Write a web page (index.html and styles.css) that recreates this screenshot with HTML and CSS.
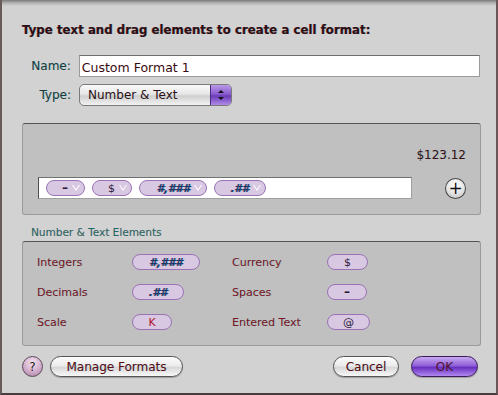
FILE: index.html
```html
<!DOCTYPE html>
<html lang="en">

<head>
    <meta charset="UTF-8">
    <title>Cell Format</title>
    <link rel="stylesheet" href="styles.css">
</head>

<body>
    <div class="sheet">
        <h1 class="title">Type text and drag elements to create a cell format:</h1>

        <div class="field-row">
            <label class="field-label" for="name">Name:</label>
            <input type="text" id="name" class="text-field" value="Custom Format 1">
        </div>
        <div class="field-row type-row">
            <span class="field-label">Type:</span>
            <div class="popup">
                <span class="popup-text">Number &amp; Text</span>
                <span class="popup-arrows">
                    <svg width="14" height="16" viewBox="0 0 14 16">
                        <path d="M4 6 L7 3 L10 6 Z" fill="#111"/>
                        <path d="M4 10 L7 13 L10 10 Z" fill="#111"/>
                    </svg>
                </span>
            </div>
        </div>

        <!-- 预览区 -->
        <div class="preview">
            <div class="sample">$123.12</div>
            <div class="token-row">
                <div class="token-field">
                    <span class="token t-space"><b class="dash">–</b><i class="caret"></i></span>
                    <span class="token t-cur"><b>$</b><i class="caret"></i></span>
                    <span class="token t-int"><b class="hash">#,###</b><i class="caret"></i></span>
                    <span class="token t-dec"><b class="hash">.##</b><i class="caret"></i></span>
                </div>
                <a href="#" class="add-btn">+</a>
            </div>
        </div>

        <div class="group-label">Number &amp; Text Elements</div>
        <div class="elements">
            <span class="el-label">Integers</span>
            <span class="pill w68"><b class="hash">#,###</b></span>
            <span class="el-label">Currency</span>
            <span class="pill w41"><b>$</b></span>

            <span class="el-label">Decimals</span>
            <span class="pill w52"><b class="hash">.##</b></span>
            <span class="el-label">Spaces</span>
            <span class="pill w40"><b class="dash">–</b></span>

            <span class="el-label">Scale</span>
            <span class="pill w40"><b class="k">K</b></span>
            <span class="el-label">Entered Text</span>
            <span class="pill w43"><b>@</b></span>
        </div>

        <div class="buttons">
            <a href="#" class="help">?</a>
            <a href="#" class="btn manage">Manage Formats</a>
            <span class="spacer"></span>
            <a href="#" class="btn cancel">Cancel</a>
            <a href="#" class="btn ok">OK</a>
        </div>
    </div>
</body>

</html>
```

FILE: styles.css
```css
* {
    box-sizing: border-box;
}

body {
    margin: 0;
    width: 498px;
    height: 395px;
    background-color: #d2d2d2;
    font-family: "DejaVu Sans", "Liberation Sans", sans-serif;
    color: #2a1a1c;
    overflow: hidden;
}

h1,
p,
span,
div,
a {
    margin: 0;
    padding: 0;
}

a {
    text-decoration: none;
}

.sheet {
    display: flex;
    flex-direction: column;
    width: 498px;
    height: 395px;
    padding: 0 16px 0 20px;
    border-left: 2px solid #6a5a5c;
    border-right: 2px solid #6a5658;
    border-bottom: 2px solid #4a3c3e;
    background: linear-gradient(#7a7a7a, #b4b4b4 3px, #d2d2d2 6px, #d2d2d2);
}

.title {
    margin: 22px 0 0 0;
    font-size: 11.8px;
    font-weight: bold;
    line-height: 16px;
    color: #2a1014;
    text-shadow: -0.5px 0 rgba(210, 0, 20, .45), 0.5px 0 rgba(0, 170, 170, .4);
}

.field-row {
    display: flex;
    align-items: center;
    margin-top: 17px;
}

.type-row {
    margin-top: 7px;
}

.field-label {
    width: 49px;
    margin-right: 8px;
    text-align: right;
    font-size: 12px;
    color: #1c3a3c;
    text-shadow: 0.5px 0 rgba(0, 170, 170, .4);
}

.text-field {
    width: 403px;
    height: 22px;
    padding: 2px 2px 0;
    border: 1px solid #9a9a9a;
    border-top-color: #6e6e6e;
    background: #fff;
    font-family: inherit;
    font-size: 12.5px;
    color: #3a0a10;
    outline: none;
}

.popup {
    display: flex;
    align-items: center;
    width: 153px;
    height: 22px;
    border: 1px solid #7a7a7a;
    border-radius: 5px;
    background: linear-gradient(#fafafa, #e6e6e6 45%, #cfcfcf 55%, #f2f2f2);
    overflow: hidden;
}

.popup-text {
    flex: 1;
    padding-left: 8px;
    font-size: 12px;
    color: #2a1014;
}

.popup-arrows {
    display: flex;
    align-items: center;
    justify-content: center;
    width: 21px;
    height: 20px;
    border-left: 1px solid #4a2a80;
    background: linear-gradient(#b89ae6, #8a5cd0 45%, #6a3cb6 55%, #b08ae8);
}

/* 预览区 */
.preview {
    width: 459px;
    height: 92px;
    margin-top: 17px;
    padding: 24px 14px 0 15px;
    border: 1px solid #9a9a9a;
    border-top-color: #555;
    border-radius: 3px;
    background-color: #c0c0c0;
}

.sample {
    text-align: right;
    font-size: 12px;
    line-height: 14px;
    color: #3a1014;
    text-shadow: 0.5px 0 rgba(0, 170, 170, .4);
}

.token-row {
    display: flex;
    align-items: center;
    margin-top: 15px;
}

.token-field {
    display: flex;
    align-items: center;
    gap: 7px;
    width: 376px;
    height: 22px;
    padding-left: 7px;
    border: 1px solid #a0a0a0;
    border-top-color: #707070;
    border-left-color: #505050;
    background: #fff;
}

.token,
.pill {
    display: flex;
    align-items: center;
    justify-content: center;
    height: 16px;
    border: 1px solid #9a72b6;
    border-radius: 8px;
    background-color: #d8c8e2;
    font-size: 11px;
    color: #2a1a3a;
}

.token {
    justify-content: flex-end;
    padding-right: 4px;
}

.token b,
.pill b {
    font-weight: normal;
}

.dash {
    font-weight: bold !important;
    font-size: 12px;
}

.hash {
    font-style: italic;
    font-weight: bold !important;
    color: #1a3a6a;
    letter-spacing: -0.3px;
    text-shadow: -0.5px 0 rgba(220, 0, 20, .45), 0.5px 0 rgba(0, 190, 210, .55);
}

.k {
    color: #b0102a;
}

.t-space {
    width: 39px;
}

.t-cur {
    width: 40px;
}

.t-int {
    width: 68px;
}

.t-dec {
    width: 52px;
}

.caret {
    width: 8px;
    height: 6px;
    margin-left: 4px;
    background: #fff;
    clip-path: polygon(0 0, 14% 0, 50% 72%, 86% 0, 100% 0, 50% 100%);
}

.add-btn {
    display: flex;
    align-items: center;
    justify-content: center;
    width: 21px;
    height: 21px;
    margin-left: 33px;
    border: 1px solid #4a4a4a;
    border-radius: 50%;
    background: radial-gradient(circle at 50% 30%, #ffffff, #e4e4e4 55%, #b8b8b8);
    font-size: 17px;
    line-height: 1;
    color: #111;
}

.group-label {
    margin: 10px 0 0 9px;
    font-size: 10.5px;
    line-height: 14px;
    color: #1a6a6a;
    text-shadow: 0.5px 0 rgba(220, 40, 40, .3);
}

.elements {
    display: grid;
    grid-template-columns: 95px 100px 95px 1fr;
    grid-auto-rows: 30px;
    align-items: center;
    width: 459px;
    height: 105px;
    margin-top: 2px;
    padding: 5px 0 0 14px;
    border: 1px solid #9a9a9a;
    border-top-color: #555;
    border-radius: 3px;
    background-color: #c0c0c0;
}

.el-label {
    font-size: 11px;
    color: #7a1424;
    text-shadow: 0.5px 0 rgba(0, 170, 170, .35);
}

.w68 {
    width: 68px;
}

.w52 {
    width: 52px;
}

.w40 {
    width: 40px;
}

.w41 {
    width: 41px;
}

.w43 {
    width: 43px;
}

.buttons {
    display: flex;
    align-items: center;
    margin-top: 10px;
}

.help {
    display: flex;
    align-items: center;
    justify-content: center;
    width: 21px;
    height: 21px;
    border: 1px solid #5a4a5a;
    border-radius: 50%;
    background: radial-gradient(circle at 50% 30%, #f4e4f0, #cfa8c8 60%, #a07898);
    font-size: 12px;
    color: #1a1a1a;
}

.btn {
    display: flex;
    align-items: center;
    justify-content: center;
    height: 21px;
    border: 1px solid #555;
    border-radius: 11px;
    background: linear-gradient(#fcfcfc, #ececec 45%, #d8d8d8 55%, #f8f8f8);
    box-shadow: 0 1px 1px rgba(0, 0, 0, .25);
    font-size: 12px;
    color: #5a0a14;
    text-shadow: 0.5px 0 rgba(0, 170, 170, .35);
}

.manage {
    width: 133px;
    margin-left: 7px;
}

.spacer {
    flex: 1;
}

.cancel {
    width: 66px;
}

.ok {
    width: 67px;
    margin-left: 12px;
    margin-right: 2px;
    border-color: #3a1a5a;
    background: linear-gradient(#c8a8f0, #9060d8 45%, #6a30c0 55%, #b088f0);
    color: #5a0a30;
}
```
